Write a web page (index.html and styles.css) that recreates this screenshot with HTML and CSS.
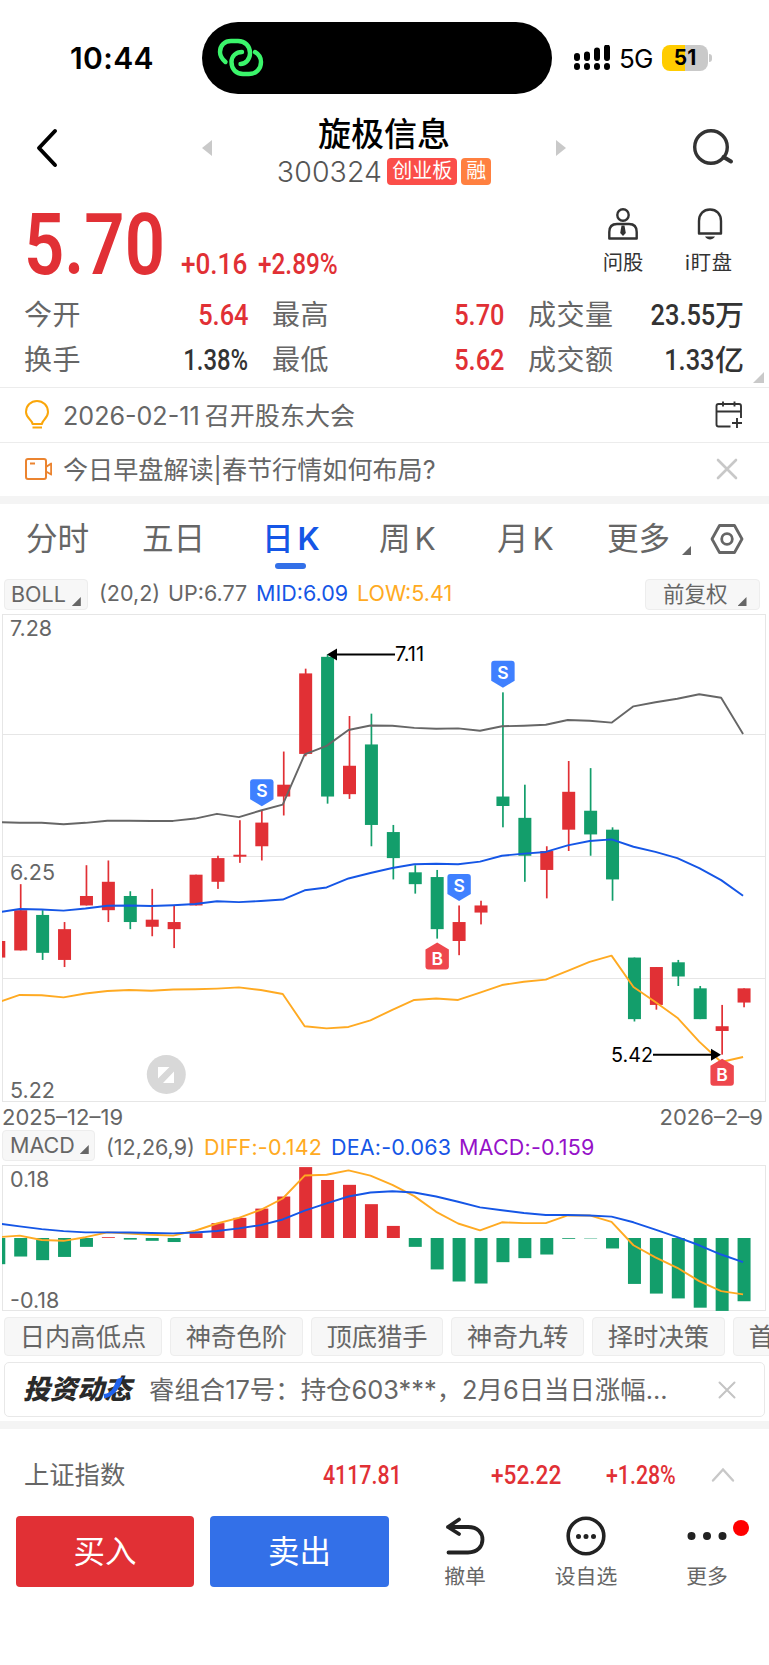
FILE: index.html
```html
<!doctype html>
<html lang="zh-CN">
  <head>
    <meta charset="UTF-8" />
    <meta name="viewport" content="width=device-width, initial-scale=1.0" />
    <title>旋极信息 300324</title>
    <link rel="stylesheet" href="styles.css">
  </head>
  <body>
    <div class="status-bar">
      <div class="clock">10:44</div>
      <div class="island">
        <svg width="48" height="40" viewBox="0 0 48 40" fill="none" stroke="#3bf56b" stroke-width="4.4" stroke-linecap="round">
          <path d="M8.500 24 C5 21 3 18 3 14 C3 7 8 3 14 3 H21 C28 3 33 8 33 15 C33 21 29 26 23.500 26" />
          <path d="M25 14 C19 14 14.500 18 14.500 24 C14.500 31 19 36 26 36 H32 C39 36 44 31 44 24 C44 19.500 41.500 16 38 14" />
        </svg>
      </div>
      <div class="signal">
        <svg width="38" height="26" viewBox="0 0 38 26">
          <g stroke="#000" stroke-width="6" stroke-linecap="round">
            <path d="M4 11v2M14 9.500v3.500M24 5.500v7.500M34 2.500v10.500M4 21v1M14 21v1M24 21v1M34 21v1" />
          </g>
        </svg>
      </div>
      <div class="network">5G</div>
      <div class="battery"><span>51</span></div>
      <div class="battery-cap"></div>
    </div>

    <header class="nav">
      <svg class="back" width="24" height="40" viewBox="0 0 24 40" fill="none" stroke="#000" stroke-width="4" stroke-linecap="round" stroke-linejoin="round">
        <path d="M20 3 L4 20 L20 37" />
      </svg>
      <div class="arrow arrow-left"></div>
      <div class="stock">
        <h1>旋极信息</h1>
        <div class="code">
          <span class="code-num">300324</span>
          <span class="tag">创业板</span>
          <span class="tag tag-orange">融</span>
        </div>
      </div>
      <div class="arrow arrow-right"></div>
      <svg class="search" width="44" height="40" viewBox="0 0 44 40" fill="none" stroke="#333" stroke-width="3.400" stroke-linecap="round">
        <circle cx="20" cy="20" r="16.300" />
        <path d="M32.500 30 L40 34.500" stroke-width="4" />
      </svg>
    </header>

    <section class="quote">
      <div class="price-row">
        <div class="price"><span class="din">5.70</span></div>
        <div class="change"><span class="din">+0.16</span></div>
        <div class="percent"><span class="din">+2.89%</span></div>
        <div class="action">
          <svg width="32" height="34" viewBox="0 0 32 34" fill="none" stroke="#333" stroke-width="2.400">
            <circle cx="16" cy="8" r="5.700" />
            <path d="M2.300 31.500 V25 C2.300 19.500 5 17 10 17 H22 C27 17 29.700 19.500 29.700 25 V31.500 Z" stroke-linejoin="round" />
            <path d="M14.500 18.500 h3 l1.300 7.500 -2.800 3 -2.800 -3z" fill="#333" stroke="none" />
          </svg>
          <span>问股</span>
        </div>
        <div class="action action-watch">
          <svg width="32" height="34" viewBox="0 0 32 34" fill="none" stroke="#333" stroke-width="2.400">
            <path d="M5 26.500 V14 C5 7 9.500 2.500 16 2.500 S27 7 27 14 V26.500 Z" stroke-linejoin="round" />
            <path d="M11 29.500 h10 c-1.500 2.200 -3.200 3 -5 3 s-3.500 -.8 -5 -3z" fill="#333" stroke="none" />
          </svg>
          <span>i盯盘</span>
        </div>
      </div>
      <div class="stats">
        <div class="stat"><label>今开</label><b class="up"><span class="din">5.64</span></b></div>
        <div class="stat"><label>最高</label><b class="up"><span class="din">5.70</span></b></div>
        <div class="stat"><label>成交量</label><b><span class="din">23.55</span>万</b></div>
        <div class="stat"><label>换手</label><b><span class="din rate">1.38%</span></b></div>
        <div class="stat"><label>最低</label><b class="up"><span class="din">5.62</span></b></div>
        <div class="stat"><label>成交额</label><b><span class="din">1.33</span>亿</b></div>
      </div>
      <div class="corner"></div>
    </section>

    <div class="notice">
      <svg width="28" height="32" viewBox="0 0 28 32" fill="none" stroke="#faa60a" stroke-width="2">
        <path d="M8.500 25 C8.500 21 2 19.500 2 13 C2 6.500 7 2 13 2 S24 6.500 24 13 C24 19.500 18 21 18 25 Z" stroke-linejoin="round" />
        <path d="M8.500 28.500 h9.500" />
      </svg>
      <p>2026-02-11<span class="gap"></span>召开股东大会</p>
      <svg class="notice-end" width="28" height="28" viewBox="0 0 28 28" fill="none" stroke="#333" stroke-width="1.900">
        <path d="M15.500 25.500 H3.500 Q1.500 25.500 1.500 23.500 V5 Q1.500 3 3.500 3 H24 Q26 3 26 5 V17 M1.500 10.500 H26 M8 .5 V5.500 M19.500 .5 V5.500 M17 22 H27 M22 17 V27" />
      </svg>
    </div>
    <div class="notice notice-video">
      <svg width="28" height="24" viewBox="0 0 28 24" fill="none" stroke="#eb8430" stroke-width="2" stroke-linejoin="round">
        <rect x="2" y="2" width="20" height="20" rx="2" />
        <path d="M22 10 L27.200 6.500 V17.500 L22 14.500 M6 6.500 h5" />
      </svg>
      <p>今日早盘解读|春节行情如何布局?</p>
      <svg class="notice-end close" width="22" height="22" viewBox="0 0 22 22" stroke="#c8c8c8" stroke-width="2.600" stroke-linecap="round">
        <path d="M2 2 L20 20 M20 2 L2 20" />
      </svg>
    </div>

    <nav class="tabs">
      <a>分时</a>
      <a>五日</a>
      <a class="active">日<span>K</span></a>
      <a>周<span>K</span></a>
      <a>月<span>K</span></a>
      <a class="more">更多</a>
      <i class="tri"></i>
      <svg width="34" height="32" viewBox="0 0 34 32" fill="none" stroke="#666" stroke-width="2.800" stroke-linejoin="round">
        <path d="M9.500 2.500 H24.500 L32 16 L24.500 29.500 H9.500 L2 16 Z" />
        <circle cx="17" cy="16" r="5.300" />
      </svg>
    </nav>

    <div class="indicator">
      <div class="picker picker-boll">BOLL<i class="tri"></i></div>
      <span class="param">(20,2)</span>
      <span class="up-val">UP:6.77</span>
      <span class="blue">MID:6.09</span>
      <span class="yellow low-val">LOW:5.41</span>
      <div class="picker picker-adjust">前复权<i class="tri"></i></div>
    </div>

    <svg id="kline" class="chart" width="769" height="492" viewBox="0 0 769 492"></svg>

    <div class="dates"><span>2025–12–19</span><span>2026–2–9</span></div>

    <div class="indicator indicator-macd">
      <div class="picker picker-macd">MACD<i class="tri"></i></div>
      <span class="param">(12,26,9)</span>
      <span class="yellow diff-val">DIFF:-0.142</span>
      <span class="blue dea-val">DEA:-0.063</span>
      <span class="purple">MACD:-0.159</span>
    </div>

    <svg id="macd" class="chart" width="769" height="150" viewBox="0 0 769 150"></svg>

    <div class="tools">
      <a class="wide">日内高低点</a>
      <a>神奇色阶</a>
      <a>顶底猎手</a>
      <a>神奇九转</a>
      <a>择时决策</a>
      <a>首</a>
    </div>

    <div class="banner">
      <div class="banner-logo"><span>投资动态</span>
        <svg width="22" height="24" viewBox="0 0 22 24"><path d="M1 18 C9 17 10 12 14 3 L20 1 C17 11 13 20 1 22.500 Z" fill="#1f62ee" /></svg>
      </div>
      <p>睿组合17号：持仓603***，2月6日当日涨幅...</p>
      <svg width="18" height="18" viewBox="0 0 18 18" stroke="#c4c4c4" stroke-width="2" stroke-linecap="round">
        <path d="M1.500 1.500 L16.500 16.500 M16.500 1.500 L1.500 16.500" />
      </svg>
    </div>

    <div class="index-row">
      <span class="index-name">上证指数</span>
      <b class="din index-value">4117.81</b>
      <b class="din index-change">+52.22</b>
      <b class="din index-percent">+1.28%</b>
      <svg width="24" height="16" viewBox="0 0 24 16" fill="none" stroke="#c8c8c8" stroke-width="2.400" stroke-linecap="round">
        <path d="M2 13.500 L12 2.500 L22 13.500" />
      </svg>
    </div>

    <footer class="trade">
      <button class="buy">买入</button>
      <button class="sell">卖出</button>
      <div class="trade-item">
        <svg width="42" height="40" viewBox="0 0 42 40" fill="none" stroke="#222" stroke-width="3.800" stroke-linecap="round" stroke-linejoin="round">
          <path d="M15 3.500 L4 11 L15 18 M4 11 H24 C34 11 38.500 17 38.500 23.500 S34 36.500 24 36.500 H4.500" />
        </svg>
        <span>撤单</span>
      </div>
      <div class="trade-item">
        <svg width="42" height="40" viewBox="0 0 42 40" fill="none" stroke="#222" stroke-width="3.600">
          <circle cx="21" cy="20" r="17.800" />
          <path d="M13.500 20.500h.01M21 20.500h.01M28.500 20.500h.01" stroke-width="5" stroke-linecap="round" />
        </svg>
        <span>设自选</span>
      </div>
      <div class="trade-item">
        <svg width="42" height="40" viewBox="0 0 42 40" stroke="#222" stroke-width="8" stroke-linecap="round">
          <path d="M5.500 20h.01M21 20h.01M36.500 20h.01" />
        </svg>
        <span>更多</span>
        <i class="red-dot"></i>
      </div>
    </footer>

    <script src="chart.js"></script>
  </body>
</html>
```
FILE: styles.css
```css
* {
  margin: 0;
  padding: 0;
  box-sizing: border-box;
}

body {
  width: 769px;
  height: 1665px;
  overflow: hidden;
  background: #fff;
  color: #333;
  font-family: Inter, "Noto Sans CJK SC", sans-serif;
}

svg {
  display: block;
  flex: none;
}

/* narrow digits */
.din {
  display: inline-block;
  font-family: Roboto, "Noto Sans CJK SC", sans-serif;
  font-weight: 500;
  white-space: nowrap;
}

.up {
  color: #e13035;
}

.blue {
  color: #1556e6;
}

.yellow {
  color: #ffaa22;
}

.purple {
  color: #9511c8;
}

/* status bar */
.status-bar {
  display: flex;
  align-items: center;
  height: 116px;
  padding-left: 70px;
  color: #000;
}

.clock {
  width: 132px;
  font-size: 30px;
  font-weight: 600;
  letter-spacing: 0.4px;
}

.island {
  display: flex;
  align-items: center;
  width: 350px;
  height: 72px;
  padding-left: 15px;
  border-radius: 36px;
  background: #000;
}

.signal {
  margin-left: 21px;
}

.network {
  width: 43px;
  margin-left: 8px;
  font-size: 26px;
  letter-spacing: -0.8px;
}

.battery {
  width: 46px;
  height: 26px;
  border-radius: 8px;
  background: linear-gradient(90deg, #ffcc00 51%, #c9c9c9 51%);
  font-size: 21px;
  font-weight: 700;
  line-height: 26px;
  text-align: center;
}

.battery-cap {
  width: 3px;
  height: 8px;
  margin-left: 1px;
  border-radius: 0 3px 3px 0;
  background: #c9c9c9;
}

/* title */
.nav {
  display: flex;
  height: 84px;
  padding-left: 35px;
}

.back {
  margin-top: 12px;
}

.arrow {
  margin-top: 24px;
  width: 10px;
  height: 16px;
  background: #c9c9c9;
}

.arrow-left {
  margin-left: 143px;
  clip-path: polygon(100% 0, 100% 100%, 0 50%);
}

.arrow-right {
  clip-path: polygon(0 0, 100% 50%, 0 100%);
}

.stock {
  width: 344px;
  text-align: center;
}

.stock h1 {
  height: 38px;
  line-height: 37px;
  font-size: 33px;
  font-weight: 500;
  color: #000;
}

.code {
  display: flex;
  justify-content: center;
  align-items: center;
  gap: 4px;
  height: 34px;
}

.code-num {
  margin-right: 1px;
  font-size: 28.5px;
  font-weight: 300;
  letter-spacing: 0.1px;
  color: #555;
}

.tag {
  height: 27px;
  padding: 0 5px;
  border-radius: 4px;
  background: #fb4e49;
  color: #fff;
  font-size: 20px;
  line-height: 27px;
}

.tag-orange {
  background: #ff8040;
}

.search {
  margin-top: 11px;
  margin-left: 125px;
}

/* quote */
.quote {
  position: relative;
  height: 188px;
  border-bottom: 1px solid #ececec;
}

.price-row {
  display: flex;
  height: 93px;
  padding-left: 24px;
  color: #e13035;
}

.price {
  width: 157px;
  font-size: 85px;
  line-height: 88px;
}

.price .din {
  font-weight: 600;
  transform: scaleX(0.83);
  transform-origin: left;
}

.change,
.percent {
  width: 77px;
  padding-top: 44px;
  font-size: 29px;
  line-height: 40px;
}

.percent {
  width: 337px;
}

.change .din {
  transform: scaleX(0.9);
  transform-origin: left;
}

.percent .din {
  transform: scaleX(0.84);
  transform-origin: left;
}

.action {
  width: 56px;
  padding-top: 7px;
  font-size: 20.3px;
  line-height: 26px;
  text-align: center;
  white-space: nowrap;
  color: #333;
}

.action svg {
  margin: 0 auto 9px;
}

.action-watch {
  margin-left: 30px;
  letter-spacing: 0.8px;
}

.action-watch svg {
  margin-left: 13px;
}

.stats {
  display: grid;
  grid-template-columns: 224px 232px 216px;
  grid-auto-rows: 45px;
  column-gap: 24px;
  padding-left: 24px;
}

.stat {
  display: flex;
  justify-content: space-between;
  line-height: 45px;
}

.stat label {
  font-size: 28px;
  letter-spacing: 0.5px;
  color: #666;
}

.stat b {
  display: flex;
  font-size: 29px;
  font-weight: 500;
}

.stat .din {
  font-size: 29.5px;
  transform: scaleX(0.86);
  transform-origin: right;
}

.stat .rate {
  transform: scaleX(0.81);
}

.corner {
  position: absolute;
  right: 5px;
  bottom: 4px;
  width: 11px;
  height: 11px;
  background: #c9c9c9;
  clip-path: polygon(100% 0, 100% 100%, 0 100%);
}

/* notices */
.notice {
  display: flex;
  align-items: center;
  height: 55px;
  padding: 0 26px 0 24px;
  border-bottom: 1px solid #ececec;
}

.notice p {
  margin-left: 11px;
  margin-top: -2px;
  font-size: 25.1px;
  white-space: nowrap;
  color: #666;
}

.notice .gap {
  margin-left: 5px;
}

.notice-end {
  margin-left: auto;
}

.close {
  margin-right: 5px;
}

.notice-video {
  height: 61px;
  padding-bottom: 1px;
  border-bottom: 8px solid #f4f4f4;
}

/* period tabs */
.tabs {
  display: grid;
  grid-template-columns: 116px 122px 115px 118px 110px 75px 28px 34px;
  height: 71px;
  padding: 17px 0 0 26px;
  font-size: 31.6px;
  line-height: 36px;
  color: #666;
}

.tabs a {
  white-space: nowrap;
}

.tabs a span {
  margin-left: 4px;
}

.tabs .active {
  position: relative;
  margin-left: -2px;
  font-weight: 500;
  color: #1556e6;
}

.tabs .active span {
  font-weight: 600;
}

.tabs .active::after {
  content: "";
  position: absolute;
  left: 13px;
  top: 42px;
  width: 31px;
  height: 6px;
  border-radius: 3px;
  background: #3370e8;
}

.tri {
  display: block;
  width: 9px;
  height: 9px;
  background: #666;
  clip-path: polygon(100% 0, 100% 100%, 0 100%);
}

.tabs .tri {
  margin-top: 25px;
}

.tabs svg {
  margin-top: 2px;
}

/* indicator rows */
.indicator {
  display: flex;
  height: 37px;
  padding: 4px 9px 0 4px;
  font-size: 21.5px;
  line-height: 29px;
  white-space: nowrap;
  color: #666;
}

.picker {
  display: flex;
  height: 31px;
  border: 1px solid #ededed;
  border-radius: 4px;
  background: #f7f7f7;
}

.picker .tri {
  margin-top: 17px;
}

.picker-boll {
  width: 84px;
  padding-left: 6px;
}

.picker-boll .tri {
  margin-left: 6px;
}

.picker-adjust {
  width: 115px;
  margin-left: auto;
  padding-left: 17px;
}

.picker-adjust .tri {
  margin-left: 10px;
}

.indicator .param {
  margin-left: 11px;
  width: 69px;
}

.indicator .up-val {
  width: 88px;
}

.indicator .blue {
  width: 101px;
}

.chart {
  font-family: Inter, sans-serif;
}

.dates {
  display: flex;
  justify-content: space-between;
  height: 25px;
  padding: 0 6px 0 2px;
  font-size: 22px;
  line-height: 27px;
  color: #666;
}

.indicator-macd {
  height: 34px;
  padding: 1px 0 0 2px;
}

.indicator-macd > span {
  padding-top: 3px;
}

.picker-macd {
  width: 93px;
  padding-left: 7px;
}

.picker-macd .tri {
  margin: 14px 0 0 5px;
}

.indicator-macd .param {
  width: 98px;
}

.indicator-macd .diff-val {
  width: 127px;
  letter-spacing: 0.2px;
}

.indicator-macd .dea-val {
  width: 128px;
  letter-spacing: 0.2px;
}

.indicator-macd .purple {
  letter-spacing: 0.2px;
}

/* tool chips */
.tools {
  display: flex;
  gap: 8px;
  height: 49px;
  padding: 4px 0 0 4px;
  overflow: hidden;
}

.tools a {
  flex: none;
  width: 132.7px;
  height: 39px;
  border: 1px solid #ededed;
  border-radius: 4px;
  background: #f7f7f7;
  font-size: 25.3px;
  line-height: 37px;
  text-align: center;
  color: #666;
}

.tools .wide {
  width: 158px;
}

.tools a:last-child {
  padding-left: 15px;
  text-align: left;
}

/* banner */
.banner {
  display: flex;
  align-items: center;
  height: 55px;
  margin: 0 4px 4px;
  padding: 0 28px 0 19px;
  border: 1px solid #e8e8e8;
  border-radius: 5px;
}

.banner-logo {
  position: relative;
  width: 125px;
  font-size: 27px;
  font-weight: 900;
  font-style: italic;
  line-height: 32px;
  white-space: nowrap;
  color: #2a2a2a;
}

.banner-logo span {
  margin-left: -1px;
}

.banner-logo svg {
  position: absolute;
  left: 79px;
  top: 2px;
}

.banner p {
  flex: 1;
  font-size: 25.4px;
  line-height: 36px;
  white-space: nowrap;
  color: #666;
}

/* index */
.index-row {
  display: flex;
  align-items: center;
  height: 94px;
  padding: 6px 34px 0 24px;
  border-top: 8px solid #f4f4f4;
  color: #e13035;
}

.index-name {
  width: 300px;
  margin-top: -4px;
  font-size: 25.3px;
  color: #666;
}

.index-row .din {
  font-size: 26px;
  transform: scaleX(0.82);
  transform-origin: left;
}

.index-value {
  width: 168px;
}

.index-row .index-change {
  width: 116px;
  transform: scaleX(0.87);
}

.index-percent {
  width: 105px;
}

/* bottom bar */
.trade {
  display: flex;
  height: 150px;
  padding: 1px 0 0 16px;
}

.trade button {
  width: 178px;
  height: 71px;
  margin-right: 16px;
  border: none;
  border-radius: 4px;
  background: #e13035;
  color: #fff;
  font-family: inherit;
  font-size: 31.5px;
  line-height: 71px;
}

.trade .sell {
  width: 179px;
  background: #3370e8;
}

.trade-item {
  position: relative;
  left: -0.5px;
  width: 121px;
  font-size: 20.8px;
  line-height: 28px;
  text-align: center;
  color: #666;
}

.trade-item svg {
  margin: 0 auto 7px;
}

.red-dot {
  position: absolute;
  left: 86px;
  top: 4px;
  width: 16px;
  height: 16px;
  border-radius: 50%;
  background: #ff0000;
}
```
FILE: chart.js
```js
const RED = "#e13035";
const GREEN = "#139e6b";
const FIRST_X = 20.7;
const STEP = 21.92;
const BAR = 13;
const SCALE = 236.8;

// [open, close, high, low], the first day is cut by the left edge
const candles = [
  [5.83, 5.9, 5.9, 5.83],
  [5.86, 6.03, 6.14, 5.86],
  [6.01, 5.85, 6.03, 5.82],
  [5.82, 5.95, 5.98, 5.79],
  [6.05, 6.09, 6.22, 6.05],
  [6.03, 6.15, 6.24, 5.98],
  [6.09, 5.98, 6.11, 5.95],
  [5.96, 5.99, 6.12, 5.92],
  [5.95, 5.98, 6.05, 5.87],
  [6.05, 6.18, 6.18, 6.05],
  [6.15, 6.25, 6.26, 6.12],
  [6.26, 6.26, 6.41, 6.23],
  [6.3, 6.4, 6.45, 6.24],
  [6.51, 6.56, 6.7, 6.43],
  [6.69, 7.03, 7.05, 6.68],
  [7.1, 6.51, 7.11, 6.48],
  [6.52, 6.64, 6.85, 6.5],
  [6.73, 6.39, 6.86, 6.3],
  [6.36, 6.25, 6.39, 6.16],
  [6.19, 6.14, 6.22, 6.1],
  [6.17, 5.95, 6.2, 5.91],
  [5.9, 5.98, 6.05, 5.84],
  [6.02, 6.05, 6.07, 5.97],
  [6.51, 6.47, 6.95, 6.38],
  [6.42, 6.26, 6.56, 6.15],
  [6.2, 6.28, 6.3, 6.08],
  [6.37, 6.53, 6.66, 6.28],
  [6.45, 6.35, 6.63, 6.26],
  [6.37, 6.16, 6.38, 6.07],
  [5.83, 5.57, 5.83, 5.56],
  [5.63, 5.79, 5.79, 5.61],
  [5.81, 5.75, 5.82, 5.71],
  [5.7, 5.57, 5.71, 5.57],
  [5.52, 5.54, 5.63, 5.42],
  [5.64, 5.7, 5.7, 5.62],
];

const upper = [
  6.402, 6.399, 6.399, 6.393, 6.399, 6.408, 6.408, 6.407, 6.407, 6.417, 6.437,
  6.423, 6.451, 6.476, 6.688, 6.724, 6.791, 6.81, 6.809, 6.8, 6.796, 6.798,
  6.788, 6.807, 6.809, 6.813, 6.833, 6.83, 6.822, 6.891, 6.908, 6.923, 6.942,
  6.927, 6.774,
];
const mid = [
  6.021, 6.035, 6.033, 6.028, 6.037, 6.049, 6.05, 6.048, 6.051, 6.056, 6.068,
  6.064, 6.069, 6.075, 6.114, 6.126, 6.164, 6.187, 6.208, 6.224, 6.226, 6.224,
  6.235, 6.26, 6.269, 6.276, 6.304, 6.322, 6.329, 6.298, 6.276, 6.25, 6.208,
  6.157, 6.091,
];
const lower = [
  5.64, 5.672, 5.671, 5.662, 5.678, 5.689, 5.693, 5.69, 5.695, 5.696, 5.699,
  5.704, 5.693, 5.676, 5.54, 5.531, 5.537, 5.565, 5.609, 5.651, 5.657, 5.651,
  5.682, 5.714, 5.728, 5.737, 5.774, 5.812, 5.838, 5.706, 5.642, 5.576, 5.475,
  5.389, 5.41,
];

const macd = [
  -0.065, -0.046, -0.055, -0.047, -0.022, 0.002, -0.004, -0.007, -0.01, 0.012,
  0.037, 0.05, 0.073, 0.103, 0.176, 0.144, 0.132, 0.084, 0.03, -0.022, -0.078,
  -0.108, -0.113, -0.06, -0.05, -0.041, -0.002, -0.001, -0.026, -0.114, -0.138,
  -0.15, -0.173, -0.181, -0.157,
];
const diff = [
  0.002, 0.006, -0.005, -0.007, 0.002, 0.014, 0.011, 0.008, 0.006, 0.018, 0.036,
  0.05, 0.07, 0.098, 0.155, 0.157, 0.168, 0.155, 0.132, 0.104, 0.065, 0.036,
  0.019, 0.039, 0.037, 0.037, 0.056, 0.056, 0.04, -0.018, -0.048, -0.074,
  -0.107, -0.132, -0.14,
];
const dea = [
  0.036, 0.029, 0.022, 0.017, 0.014, 0.014, 0.0135, 0.0125, 0.0115, 0.0135,
  0.0175, 0.024, 0.032, 0.046, 0.068, 0.086, 0.103, 0.113, 0.116, 0.113, 0.103,
  0.09, 0.076, 0.069, 0.062, 0.057, 0.057, 0.056, 0.053, 0.039, 0.021, 0.002,
  -0.018, -0.041, -0.06,
];

const x = (i) => FIRST_X + STEP * (i - 1);
const priceY = (p) => 2.2 + (7.28 - p) * SCALE;
const macdY = (v) => 75 - v * 402.8;

function rect(left, top, width, height, fill) {
  return `<rect x="${left}" y="${top}" width="${width}" height="${height}" fill="${fill}"/>`;
}

function line(values, toY, color) {
  const points = values.map((v, i) => `${x(i) - 1},${toY(v)}`).join(" ");
  return `<polyline points="${points}" fill="none" stroke="${color}" stroke-width="1.9" stroke-linejoin="round"/>`;
}

function label(left, baseline, text, color = "#666", size = 21.5) {
  return `<text x="${left}" y="${baseline}" font-size="${size}" fill="${color}">${text}</text>`;
}

function frame(bottom, rows) {
  let out = "";
  for (let i = 1; i < rows; i++) {
    const y = Math.floor(2 + ((bottom - 2) / rows) * i) - 0.5;
    out += `<path d="M2.5 ${y}H765.5" stroke="#e6e6e6"/>`;
  }
  return out + `<rect x="2.5" y="2.5" width="763" height="${bottom - 2.5}" fill="none" stroke="#e6e6e6"/>`;
}

function clip(id, content) {
  return `<clipPath id="${id}"><rect x="2" y="0" width="764" height="492"/></clipPath><g clip-path="url(#${id})">${content}</g>`;
}

// sell marker points down to the high, buy marker points up to the low
function marker(i, type) {
  const sell = type === "S";
  const tip = sell ? priceY(candles[i][2]) - 4.5 : priceY(candles[i][3]) + 4;
  const d = sell ? -1 : 1;
  const shape = `M0 0L11.7 ${7 * d}V${24 * d}Q11.7 ${27 * d} 8.7 ${27 * d}H-8.7Q-11.7 ${27 * d} -11.7 ${24 * d}V${7 * d}Z`;
  return `<g transform="translate(${x(i)} ${tip})"><path d="${shape}" fill="${sell ? "#3f80ff" : "#ee474d"}"/>
    <text x="0" y="${sell ? -9 : 22.5}" text-anchor="middle" font-size="17.5" font-weight="600" fill="#fff">${type}</text></g>`;
}

function drawKline() {
  let bars = "";
  candles.forEach(([open, close, high, low], i) => {
    const color = close >= open ? RED : GREEN;
    const top = priceY(Math.max(open, close));
    const height = Math.abs(open - close) * SCALE;
    bars += rect(x(i) - 0.85, priceY(high), 1.7, priceY(low) - priceY(high), color);
    bars += rect(x(i) - BAR / 2, top - (height ? 0 : 1), BAR, Math.max(height, 2), color);
  });

  const high = priceY(7.11);
  const low = priceY(5.42);
  document.getElementById("kline").innerHTML =
    frame(489.5, 4) +
    clip("kline-clip", bars + line(upper, priceY, "#666") + line(mid, priceY, "#1556e6") + line(lower, priceY, "#ffaa22")) +
    label(10, 24, "7.28") +
    label(10, 268, "6.25") +
    label(10, 486, "5.22") +
    `<path d="M336 ${high}H395" stroke="#000" stroke-width="2"/><path d="M327 ${high}l10 -6v12z"/>` +
    label(395, high + 7, "7.11", "#000", 20) +
    `<path d="M653 ${low}H712" stroke="#000" stroke-width="2"/><path d="M721 ${low}l-10 -6v12z"/>` +
    label(611, low + 7, "5.42", "#000", 19.8) +
    marker(12, "S") +
    marker(21, "S") +
    marker(23, "S") +
    marker(20, "B") +
    marker(33, "B") +
    `<circle cx="166.3" cy="462.5" r="19.5" fill="#d8d8d8"/>
     <path d="M158 455h11.500l-11.500 11.500zM174 459.500v11.500h-11z" fill="#fff"/>`;
}

function drawMacd() {
  const bars = macd
    .map((v, i) => rect(x(i) - BAR / 2, Math.min(75, macdY(v)), BAR, Math.abs(v) * 402.8, v > 0 ? RED : GREEN))
    .join("");
  document.getElementById("macd").innerHTML =
    frame(147.5, 1) +
    clip("macd-clip", bars + line(diff, macdY, "#ffaa22") + line(dea, macdY, "#1556e6")) +
    label(10, 24, "0.18") +
    label(10, 145, "-0.18");
}

drawKline();
drawMacd();
```
